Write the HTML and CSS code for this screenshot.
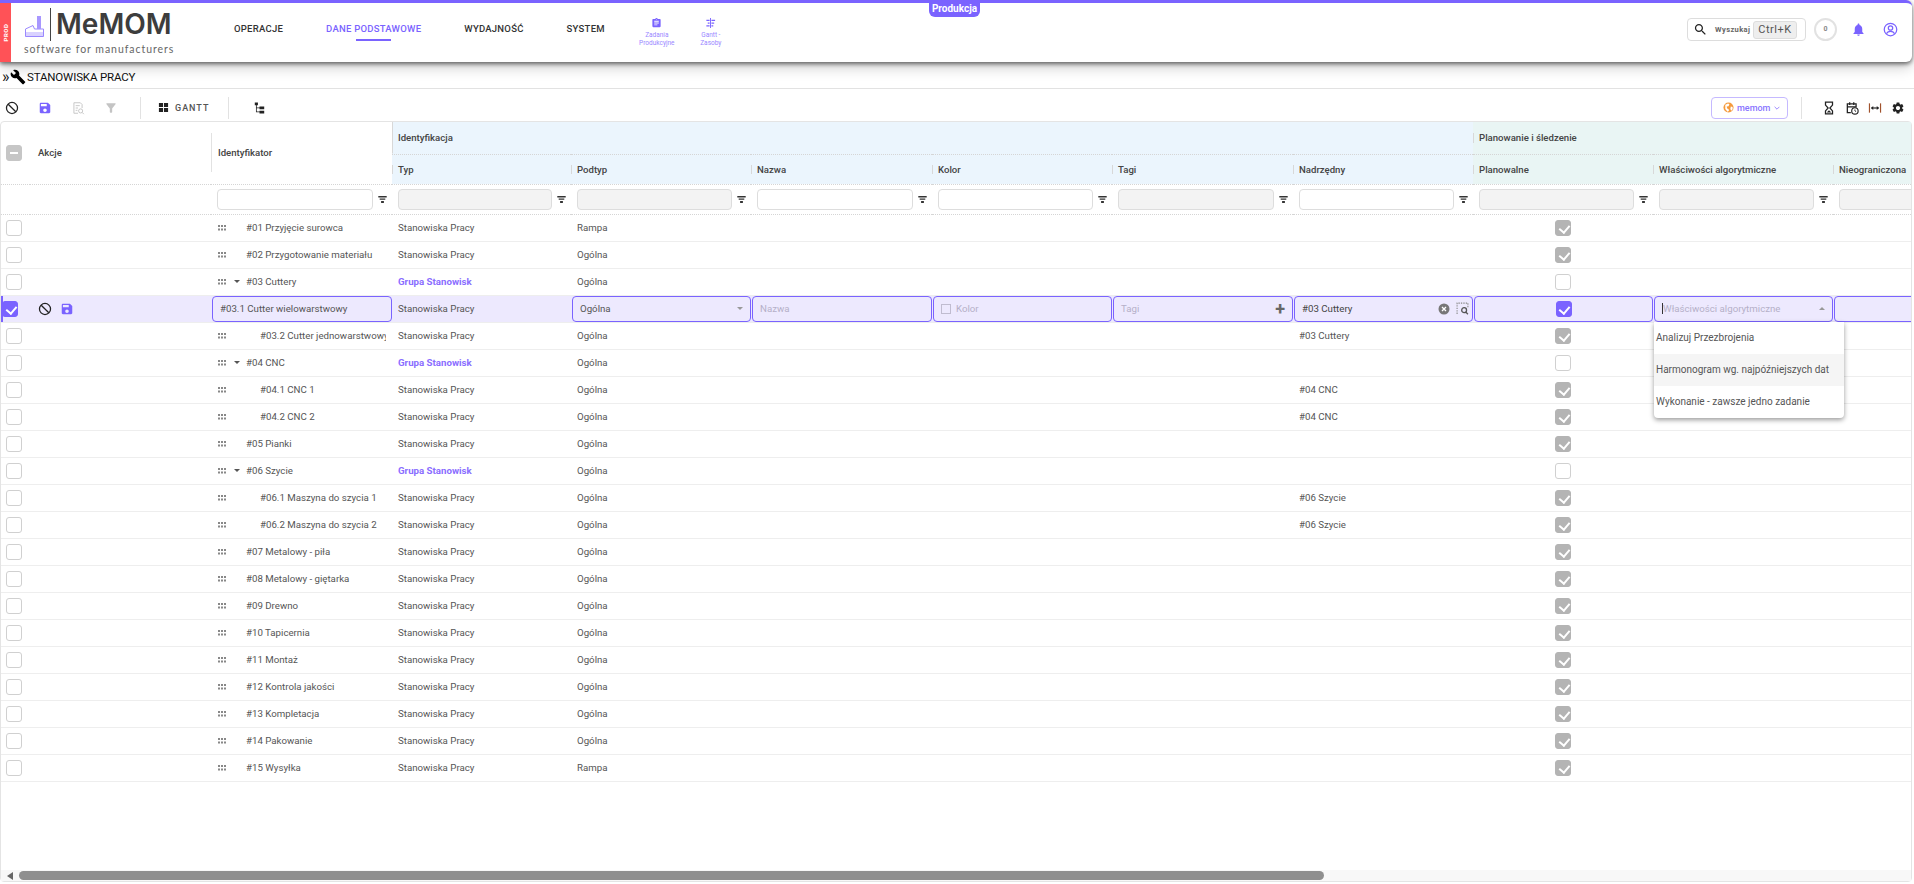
FILE: index.html
```html
<!DOCTYPE html>
<html lang="pl">
<head>
    <meta charset="utf-8"/>
    <meta name="viewport" content="width=device-width, initial-scale=1"/>
    <title>MeMOM - Stanowiska pracy</title>
    <link rel="stylesheet" href="styles.css">
</head>
<body>

    <svg class="sprites" width="0" height="0">
        <symbol id="i-filter" viewBox="0 0 12 10"><path d="M0 0h12v2H0zM2 3.500h8v2H2zM4 7h4v3H4z"/></symbol>
        <symbol id="i-drag" viewBox="0 0 8 6"><path d="M0 0h2v2H0zM3 0h2v2H3zM6 0h2v2H6zM0 3.500h2v2H0zM3 3.500h2v2H3zM6 3.500h2v2H6z"/></symbol>
        <symbol id="i-ban" viewBox="0 0 24 24"><circle cx="12" cy="12" r="9.500" fill="none" stroke="currentColor" stroke-width="2.200"/><path d="M5.500 5.500l13 13" stroke="currentColor" stroke-width="2.200"/></symbol>
        <symbol id="i-save" viewBox="0 0 24 24"><path d="M17 3H5c-1.110 0-2 .9-2 2v14c0 1.100.89 2 2 2h14c1.100 0 2-.9 2-2V7l-4-4zm-5 16c-1.660 0-3-1.340-3-3s1.340-3 3-3 3 1.340 3 3-1.340 3-3 3zm3-10H5V5h10v4z"/></symbol>
    </svg>

    <header class="topbar">
        <div class="env-strip"><span>PROD</span></div>
        <div class="logo">
            <div class="logo-top">
                <svg class="logo-icon" viewBox="0 0 21 22"><path d="M1.500 17h18v4.500h-18z" fill="#d9d2ff"/><path d="M1.500 21.500V14L9 10.500l1.500 3.500h9v7.500z" fill="none" stroke="#9a88ff" stroke-width="1"/><path d="M13 1h4v13h-4z" fill="#a897ff"/></svg>
                <span class="logo-name">MeMOM</span>
            </div>
            <div class="logo-sub">software for manufacturers</div>
        </div>
        <nav class="main-nav">
            <a class="nav-link">OPERACJE</a>
            <a class="nav-link active">DANE PODSTAWOWE</a>
            <a class="nav-link">WYDAJNOŚĆ</a>
            <a class="nav-link">SYSTEM</a>
        </nav>
        <div class="quick-links">
            <a class="quick-link">
                <svg viewBox="0 0 24 24"><path d="M19 3h-4.180C14.400 1.840 13.300 1 12 1c-1.300 0-2.400.84-2.820 2H5c-1.100 0-2 .9-2 2v14c0 1.100.9 2 2 2h14c1.100 0 2-.9 2-2V5c0-1.100-.9-2-2-2zm-7 0c.55 0 1 .45 1 1s-.45 1-1 1-1-.45-1-1 .45-1 1-1zm2 14H7v-2h7v2zm3-4H7v-2h10v2zm0-4H7V7h10v2z"/></svg>
                <span>Zadania<br>Produkcyjne</span>
            </a>
            <a class="quick-link">
                <svg viewBox="0 0 24 24"><path d="M11 1h2v22h-2zM3 5h7v2.500H3zM14 5h8v2.500h-8zM6 11h4v2.500H6zM14 11h6v2.500h-6zM3 17h7v2.500H3zM14 17h4v2.500h-4z"/></svg>
                <span>Gantt -<br>Zasoby</span>
            </a>
        </div>
        <div class="top-right">
            <div class="search-box">
                <svg viewBox="0 0 24 24"><path d="M15.500 14h-.79l-.28-.27C15.410 12.590 16 11.110 16 9.500 16 5.910 13.090 3 9.500 3S3 5.910 3 9.500 5.910 16 9.500 16c1.610 0 3.090-.59 4.230-1.570l.27.28v.79l5 4.990L20.490 19l-4.990-5zm-6 0C7.010 14 5 11.990 5 9.500S7.010 5 9.500 5 14 7.010 14 9.500 11.990 14 9.500 14z"/></svg>
                <span class="search-label">Wyszukaj</span>
                <kbd>Ctrl+K</kbd>
            </div>
            <div class="counter">0</div>
            <svg class="top-icon bell" viewBox="0 0 24 24"><path d="M12 22c1.100 0 2-.9 2-2h-4c0 1.100.89 2 2 2zm6-6v-5c0-3.070-1.640-5.640-4.500-6.320V4c0-.83-.67-1.500-1.500-1.500s-1.500.67-1.500 1.500v.68C7.630 5.360 6 7.920 6 11v5l-2 2v1h16v-1l-2-2z"/></svg>
            <svg class="top-icon user" viewBox="0 0 24 24"><circle cx="12" cy="12" r="10" fill="none" stroke="currentColor" stroke-width="2"/><circle cx="12" cy="9.500" r="3.500" fill="none" stroke="currentColor" stroke-width="2"/><path d="M5.500 18.500c1.500-2.500 3.800-3.500 6.500-3.500s5 1 6.500 3.500" fill="none" stroke="currentColor" stroke-width="2"/></svg>
        </div>
        <div class="module-tab">Produkcja</div>
    </header>

    <div class="page-title">
        <span class="crumb">»</span>
        <svg viewBox="0 0 24 24"><path d="M22.700 19l-9.100-9.100c.9-2.300.4-5-1.500-6.900-2-2-5-2.400-7.400-1.300L9 6 6 9 1.600 4.700C.4 7.100.9 10.100 2.900 12.100c1.900 1.900 4.600 2.400 6.900 1.500l9.100 9.100c.4.400 1 .4 1.400 0l2.300-2.300c.5-.4.5-1.100.1-1.400z"/></svg>
        <span>STANOWISKA PRACY</span>
    </div>

    <div class="toolbar">
        <div class="tool-group">
            <svg class="tool dark"><use href="#i-ban"/></svg>
            <svg class="tool accent"><use href="#i-save"/></svg>
            <svg class="tool muted" viewBox="0 0 24 24"><path d="M5 3h11l3 3v6M5 3v18h7M8 8h7M8 12h4M8 16h3" fill="none" stroke="currentColor" stroke-width="1.600"/><circle cx="16.500" cy="17" r="3.500" fill="none" stroke="currentColor" stroke-width="1.600"/><path d="M19 19.500l3 3" stroke="currentColor" stroke-width="1.600"/></svg>
            <svg class="tool muted" viewBox="0 0 24 24"><path d="M4.250 5.610C6.270 8.200 10 13 10 13v6c0 .55.45 1 1 1h2c.55 0 1-.45 1-1v-6s3.720-4.800 5.740-7.390c.51-.66.04-1.610-.79-1.610H5.040c-.83 0-1.300.95-.79 1.610z"/></svg>
        </div>
        <div class="tool-sep"></div>
        <div class="gantt-btn">
            <svg viewBox="0 0 12 12"><path d="M1 1h4.500v4.500H1zM6.500 1H11v4.500H6.500zM1 6.500h4.500V11H1zM6.500 6.500H11V11H6.500z"/></svg>
            <span>GANTT</span>
        </div>
        <div class="tool-sep"></div>
        <svg class="tree-btn" viewBox="0 0 14 14"><path d="M1 0h4v3.500H1zM7 5h6v3.500H7zM7 10.500h6V14H7z M2.500 3.500h1v8H7v1H2.500zM3.500 6.300H7v1H3.500z"/></svg>
        <div class="toolbar-right">
            <button type="button" class="tenant-btn">
                <svg viewBox="0 0 24 24"><circle cx="12" cy="12" r="11" fill="#f59a3c"/><path d="M5 6l6-3 3 2-2 4-4 1 1 4 3 1 1 4-3 2-5-6zM17 10l4 1v5l-3 3-2-4z" fill="#fff"/></svg>
                <span>memom</span>
                <svg class="chev" viewBox="0 0 10 6"><path d="M1 1l4 4 4-4" fill="none" stroke="currentColor" stroke-width="1.400"/></svg>
            </button>
            <div class="tool-sep"></div>
            <div class="tool-icons">
                <svg viewBox="0 0 24 24"><path d="M6 2h12v5l-4.500 5 4.500 5v5H6v-5l4.500-5L6 7z" fill="none" stroke="#222" stroke-width="2.200"/><path d="M8 19.500l4-3.500 4 3.500z" fill="#222"/></svg>
                <svg viewBox="0 0 24 24"><path d="M10 20H4V5h15v6M4 10h15M8 2v5M15 2v5" fill="none" stroke="#222" stroke-width="2.200"/><circle cx="17" cy="17" r="5.500" fill="none" stroke="#222" stroke-width="2"/><path d="M17 14.500V17l2 1.200" fill="none" stroke="#222" stroke-width="1.500"/></svg>
                <svg viewBox="0 0 24 24"><path d="M2.500 4v16" stroke="#a0522d" stroke-width="2"/><path d="M21.500 4v16" stroke="#a0522d" stroke-width="2"/><path d="M6 12h12" stroke="#222" stroke-width="2"/><path d="M5 12l4-3.500v7zM19 12l-4-3.500v7z" fill="#222"/></svg>
                <svg viewBox="0 0 24 24"><path fill="#222" d="M19.140 12.940c.04-.3.06-.61.06-.94 0-.32-.02-.64-.07-.94l2.030-1.580c.18-.14.23-.41.12-.61l-1.920-3.320c-.12-.22-.37-.29-.59-.22l-2.390.96c-.5-.38-1.030-.7-1.620-.94l-.36-2.540c-.04-.24-.24-.41-.48-.41h-3.840c-.24 0-.43.17-.47.41l-.36 2.540c-.59.24-1.130.57-1.620.94l-2.390-.96c-.22-.08-.47 0-.59.22L2.740 8.870c-.12.21-.08.47.12.61l2.030 1.580c-.05.3-.09.63-.09.94s.02.64.07.94l-2.030 1.580c-.18.14-.23.41-.12.61l1.920 3.320c.12.22.37.29.59.22l2.390-.96c.5.38 1.030.7 1.620.94l.36 2.540c.05.24.24.41.48.41h3.840c.24 0 .44-.17.47-.41l.36-2.540c.59-.24 1.130-.56 1.620-.94l2.390.96c.22.08.47 0 .59-.22l1.920-3.320c.12-.22.07-.47-.12-.61l-2.010-1.580zM12 15.600c-1.980 0-3.600-1.620-3.600-3.600s1.620-3.600 3.600-3.600 3.600 1.620 3.600 3.600-1.620 3.600-3.600 3.600z"/></svg>
            </div>
        </div>
    </div>

    <main class="grid-card">
        <div class="grid-scroll">
            <table class="grid">
                <colgroup>
                    <col class="c-check"><col class="c-actions"><col class="c-id"><col class="c-typ"><col class="c-std"><col class="c-wide"><col class="c-std"><col class="c-wide"><col class="c-std"><col class="c-std"><col class="c-std"><col class="c-std">
                </colgroup>
                <thead>
                    <tr class="head-group">
                        <th rowspan="2" class="head-check"><span class="box head-minus"></span></th>
                        <th rowspan="2" class="head-plain">Akcje</th>
                        <th rowspan="2" class="head-plain head-tall">Identyfikator</th>
                        <th colspan="6" class="blue head-tall-sep">Identyfikacja</th>
                        <th colspan="3" class="green head-sep-group">Planowanie i śledzenie</th>
                    </tr>
                    <tr class="head-cols">
                        <th class="blue"><span class="sep">Typ</span></th>
                        <th class="blue"><span class="sep">Podtyp</span></th>
                        <th class="blue"><span class="sep">Nazwa</span></th>
                        <th class="blue"><span class="sep">Kolor</span></th>
                        <th class="blue"><span class="sep">Tagi</span></th>
                        <th class="blue"><span class="sep">Nadrzędny</span></th>
                        <th class="green"><span class="sep">Planowalne</span></th>
                        <th class="green"><span class="sep">Właściwości algorytmiczne</span></th>
                        <th class="green"><span class="sep">Nieograniczona</span></th>
                    </tr>
                    <tr class="head-filter">
                        <td></td><td></td>
                        <td><div class="flt"><span class="flt-in"></span><svg><use href="#i-filter"/></svg></div></td>
                        <td><div class="flt"><span class="flt-in off"></span><svg><use href="#i-filter"/></svg></div></td>
                        <td><div class="flt"><span class="flt-in off"></span><svg><use href="#i-filter"/></svg></div></td>
                        <td><div class="flt"><span class="flt-in"></span><svg><use href="#i-filter"/></svg></div></td>
                        <td><div class="flt"><span class="flt-in"></span><svg><use href="#i-filter"/></svg></div></td>
                        <td><div class="flt"><span class="flt-in off"></span><svg><use href="#i-filter"/></svg></div></td>
                        <td><div class="flt"><span class="flt-in"></span><svg><use href="#i-filter"/></svg></div></td>
                        <td><div class="flt"><span class="flt-in off"></span><svg><use href="#i-filter"/></svg></div></td>
                        <td><div class="flt"><span class="flt-in off"></span><svg><use href="#i-filter"/></svg></div></td>
                        <td><div class="flt"><span class="flt-in off"></span><svg><use href="#i-filter"/></svg></div></td>
                    </tr>
                </thead>
                <tbody>
                    <tr><td><span class="box"></span></td><td></td><td><div class="name"><svg><use href="#i-drag"/></svg><i class="caret none"></i><span>#01 Przyjęcie surowca</span></div></td><td>Stanowiska Pracy</td><td>Rampa</td><td></td><td></td><td></td><td></td><td class="mid"><span class="box done"></span></td><td></td><td></td></tr>
                    <tr><td><span class="box"></span></td><td></td><td><div class="name"><svg><use href="#i-drag"/></svg><i class="caret none"></i><span>#02 Przygotowanie materiału</span></div></td><td>Stanowiska Pracy</td><td>Ogólna</td><td></td><td></td><td></td><td></td><td class="mid"><span class="box done"></span></td><td></td><td></td></tr>
                    <tr><td><span class="box"></span></td><td></td><td><div class="name"><svg><use href="#i-drag"/></svg><i class="caret"></i><span>#03 Cuttery</span></div></td><td class="group">Grupa Stanowisk</td><td>Ogólna</td><td></td><td></td><td></td><td></td><td class="mid"><span class="box"></span></td><td></td><td></td></tr>
                    <tr class="editing">
                        <td><span class="box on"></span></td>
                        <td><div class="row-actions"><svg class="dark"><use href="#i-ban"/></svg><svg class="accent"><use href="#i-save"/></svg></div></td>
                        <td><div class="edit"><span class="val">#03.1 Cutter wielowarstwowy</span></div></td>
                        <td>Stanowiska Pracy</td>
                        <td><div class="edit"><span class="val">Ogólna</span><i class="caret sel"></i></div></td>
                        <td><div class="edit"><span class="ph">Nazwa</span></div></td>
                        <td><div class="edit"><span class="swatch"></span><span class="ph">Kolor</span></div></td>
                        <td><div class="edit"><span class="ph">Tagi</span><b class="plus">+</b></div></td>
                        <td><div class="edit"><span class="val strong">#03 Cuttery</span>
                            <svg class="clear" viewBox="0 0 24 24"><circle cx="12" cy="12" r="11" fill="#777"/><path d="M8 8l8 8M16 8l-8 8" stroke="#fff" stroke-width="2.600"/></svg>
                            <svg class="pick" viewBox="0 0 24 24"><path d="M2 22V2h20v8" fill="none" stroke="#888" stroke-width="2" stroke-dasharray="2.500 2"/><circle cx="15" cy="15" r="4.500" fill="none" stroke="#555" stroke-width="2.400"/><path d="M18 18.500l4 4" stroke="#555" stroke-width="2.400"/></svg>
                        </div></td>
                        <td><div class="edit center"><span class="box on"></span></div></td>
                        <td class="has-menu"><div class="edit"><span class="ph cursor">Właściwości algorytmiczne</span><i class="caret sel up"></i></div>
                            <ul class="menu">
                                <li>Analizuj Przezbrojenia</li>
                                <li class="hover">Harmonogram wg. najpóźniejszych dat</li>
                                <li>Wykonanie - zawsze jedno zadanie</li>
                            </ul>
                        </td>
                        <td><div class="edit"></div></td>
                    </tr>
                    <tr><td><span class="box"></span></td><td></td><td><div class="name deep"><svg><use href="#i-drag"/></svg><span>#03.2 Cutter jednowarstwowy</span></div></td><td>Stanowiska Pracy</td><td>Ogólna</td><td></td><td></td><td></td><td>#03 Cuttery</td><td class="mid"><span class="box done"></span></td><td></td><td></td></tr>
                    <tr><td><span class="box"></span></td><td></td><td><div class="name"><svg><use href="#i-drag"/></svg><i class="caret"></i><span>#04 CNC</span></div></td><td class="group">Grupa Stanowisk</td><td>Ogólna</td><td></td><td></td><td></td><td></td><td class="mid"><span class="box"></span></td><td></td><td></td></tr>
                    <tr><td><span class="box"></span></td><td></td><td><div class="name deep"><svg><use href="#i-drag"/></svg><span>#04.1 CNC 1</span></div></td><td>Stanowiska Pracy</td><td>Ogólna</td><td></td><td></td><td></td><td>#04 CNC</td><td class="mid"><span class="box done"></span></td><td></td><td></td></tr>
                    <tr><td><span class="box"></span></td><td></td><td><div class="name deep"><svg><use href="#i-drag"/></svg><span>#04.2 CNC 2</span></div></td><td>Stanowiska Pracy</td><td>Ogólna</td><td></td><td></td><td></td><td>#04 CNC</td><td class="mid"><span class="box done"></span></td><td></td><td></td></tr>
                    <tr><td><span class="box"></span></td><td></td><td><div class="name"><svg><use href="#i-drag"/></svg><i class="caret none"></i><span>#05 Pianki</span></div></td><td>Stanowiska Pracy</td><td>Ogólna</td><td></td><td></td><td></td><td></td><td class="mid"><span class="box done"></span></td><td></td><td></td></tr>
                    <tr><td><span class="box"></span></td><td></td><td><div class="name"><svg><use href="#i-drag"/></svg><i class="caret"></i><span>#06 Szycie</span></div></td><td class="group">Grupa Stanowisk</td><td>Ogólna</td><td></td><td></td><td></td><td></td><td class="mid"><span class="box"></span></td><td></td><td></td></tr>
                    <tr><td><span class="box"></span></td><td></td><td><div class="name deep"><svg><use href="#i-drag"/></svg><span>#06.1 Maszyna do szycia 1</span></div></td><td>Stanowiska Pracy</td><td>Ogólna</td><td></td><td></td><td></td><td>#06 Szycie</td><td class="mid"><span class="box done"></span></td><td></td><td></td></tr>
                    <tr><td><span class="box"></span></td><td></td><td><div class="name deep"><svg><use href="#i-drag"/></svg><span>#06.2 Maszyna do szycia 2</span></div></td><td>Stanowiska Pracy</td><td>Ogólna</td><td></td><td></td><td></td><td>#06 Szycie</td><td class="mid"><span class="box done"></span></td><td></td><td></td></tr>
                    <tr><td><span class="box"></span></td><td></td><td><div class="name"><svg><use href="#i-drag"/></svg><i class="caret none"></i><span>#07 Metalowy - piła</span></div></td><td>Stanowiska Pracy</td><td>Ogólna</td><td></td><td></td><td></td><td></td><td class="mid"><span class="box done"></span></td><td></td><td></td></tr>
                    <tr><td><span class="box"></span></td><td></td><td><div class="name"><svg><use href="#i-drag"/></svg><i class="caret none"></i><span>#08 Metalowy - giętarka</span></div></td><td>Stanowiska Pracy</td><td>Ogólna</td><td></td><td></td><td></td><td></td><td class="mid"><span class="box done"></span></td><td></td><td></td></tr>
                    <tr><td><span class="box"></span></td><td></td><td><div class="name"><svg><use href="#i-drag"/></svg><i class="caret none"></i><span>#09 Drewno</span></div></td><td>Stanowiska Pracy</td><td>Ogólna</td><td></td><td></td><td></td><td></td><td class="mid"><span class="box done"></span></td><td></td><td></td></tr>
                    <tr><td><span class="box"></span></td><td></td><td><div class="name"><svg><use href="#i-drag"/></svg><i class="caret none"></i><span>#10 Tapicernia</span></div></td><td>Stanowiska Pracy</td><td>Ogólna</td><td></td><td></td><td></td><td></td><td class="mid"><span class="box done"></span></td><td></td><td></td></tr>
                    <tr><td><span class="box"></span></td><td></td><td><div class="name"><svg><use href="#i-drag"/></svg><i class="caret none"></i><span>#11 Montaż</span></div></td><td>Stanowiska Pracy</td><td>Ogólna</td><td></td><td></td><td></td><td></td><td class="mid"><span class="box done"></span></td><td></td><td></td></tr>
                    <tr><td><span class="box"></span></td><td></td><td><div class="name"><svg><use href="#i-drag"/></svg><i class="caret none"></i><span>#12 Kontrola jakości</span></div></td><td>Stanowiska Pracy</td><td>Ogólna</td><td></td><td></td><td></td><td></td><td class="mid"><span class="box done"></span></td><td></td><td></td></tr>
                    <tr><td><span class="box"></span></td><td></td><td><div class="name"><svg><use href="#i-drag"/></svg><i class="caret none"></i><span>#13 Kompletacja</span></div></td><td>Stanowiska Pracy</td><td>Ogólna</td><td></td><td></td><td></td><td></td><td class="mid"><span class="box done"></span></td><td></td><td></td></tr>
                    <tr><td><span class="box"></span></td><td></td><td><div class="name"><svg><use href="#i-drag"/></svg><i class="caret none"></i><span>#14 Pakowanie</span></div></td><td>Stanowiska Pracy</td><td>Ogólna</td><td></td><td></td><td></td><td></td><td class="mid"><span class="box done"></span></td><td></td><td></td></tr>
                    <tr><td><span class="box"></span></td><td></td><td><div class="name"><svg><use href="#i-drag"/></svg><i class="caret none"></i><span>#15 Wysyłka</span></div></td><td>Stanowiska Pracy</td><td>Rampa</td><td></td><td></td><td></td><td></td><td class="mid"><span class="box done"></span></td><td></td><td></td></tr>
                </tbody>
            </table>
        </div>
        <div class="hscroll">
            <i class="hscroll-arrow"></i>
            <div class="hscroll-thumb"></div>
        </div>
    </main>

</body>
</html>
```

FILE: styles.css
```css
/* kolory wspolne */
:root {
    --accent: #7a63ff;
    --text: #555;
    --line: #eee;
    --dots: #d5d5d5;
}

* {
    box-sizing: border-box;
}

html, body {
    height: 100%;
}

body {
    margin: 0;
    display: flex;
    flex-direction: column;
    overflow: hidden;
    background: #fff;
    color: var(--text);
    font-family: Roboto, "Liberation Sans", sans-serif;
    font-size: 9.700px;
}

.sprites {
    position: absolute;
}

/* gorny pasek */
.topbar {
    position: relative;
    z-index: 2;
    flex: none;
    display: flex;
    align-items: stretch;
    height: 62px;
    margin-right: 2px;
    background: #fff;
    border-top: 3px solid var(--accent);
    border-radius: 0 6px 6px 0;
    box-shadow: 0 2px 4px rgba(0, 0, 0, .55), 0 6px 14px rgba(0, 0, 0, .18);
}

.env-strip {
    flex: none;
    width: 11px;
    display: flex;
    align-items: center;
    justify-content: center;
    background: #ff5257;
}

.env-strip span {
    transform: rotate(-90deg);
    color: #fff;
    font-size: 6px;
    font-weight: 700;
    letter-spacing: .5px;
}

.logo {
    flex: none;
    width: 223px;
    padding: 5px 0 0 13px;
}

.logo-top {
    display: flex;
    align-items: center;
    height: 33px;
}

.logo-icon {
    width: 21px;
    height: 22px;
    margin-top: 2px;
}

.logo-name {
    margin-left: 5px;
    padding-left: 5px;
    border-left: 1px solid #444;
    color: #3d3d3d;
    font-family: Inter, sans-serif;
    font-size: 28px;
    font-weight: 600;
    line-height: 33px;
}

.logo-sub {
    margin-top: 2px;
    color: #666;
    font-family: Lato, sans-serif;
    font-size: 10.500px;
    letter-spacing: .96px;
    white-space: nowrap;
}

.main-nav {
    flex: none;
    display: flex;
    align-items: center;
    gap: 43px;
    padding-bottom: 8px;
}

.nav-link {
    position: relative;
    color: #333;
    font-size: 9.500px;
    font-weight: 500;
    letter-spacing: .25px;
}

.nav-link.active {
    color: var(--accent);
}

.nav-link.active::after {
    content: "";
    position: absolute;
    left: 30px;
    right: 30px;
    bottom: -7px;
    height: 2px;
    background: var(--accent);
}

.quick-links {
    display: flex;
    margin-left: 25px;
}

.quick-link {
    width: 54px;
    padding-top: 14px;
    text-align: center;
    color: #9a88ff;
    font-size: 6.500px;
    line-height: 7.500px;
}

.quick-link svg {
    display: block;
    width: 11px;
    height: 12px;
    margin: 0 auto 3px;
    fill: var(--accent);
}

.top-right {
    margin-left: auto;
    display: flex;
    align-items: center;
    gap: 8px;
    padding: 0 10px 6px 0;
}

.search-box {
    display: flex;
    align-items: center;
    width: 119px;
    height: 23px;
    padding: 0 8px 0 5px;
    border: 1px solid #ddd;
    border-radius: 4px;
}

.search-box svg {
    width: 15px;
    height: 15px;
    fill: #222;
}

.search-label {
    margin-left: 7px;
    color: #666;
    font-size: 7.500px;
    font-weight: 700;
    letter-spacing: .4px;
}

kbd {
    margin-left: auto;
    width: 44px;
    height: 18px;
    background: #eee;
    border: 1px solid #ddd;
    border-radius: 3px;
    text-align: center;
    color: #555;
    font-family: Roboto, sans-serif;
    font-size: 11px;
    letter-spacing: .5px;
    line-height: 16px;
}

.counter {
    width: 23px;
    height: 23px;
    border: 2px solid #e2e2e2;
    border-radius: 50%;
    text-align: center;
    color: #888;
    font-size: 7px;
    font-weight: 700;
    line-height: 19px;
}

.top-icon {
    width: 15px;
    height: 15px;
    color: var(--accent);
    fill: var(--accent);
}

.top-icon.bell {
    margin: 0 4px 0 6px;
}

.top-icon.user {
    margin: 0 4px 0 5px;
    fill: none;
}

.module-tab {
    position: absolute;
    top: 0;
    left: 929px;
    width: 51px;
    height: 14px;
    background: var(--accent);
    border-radius: 0 0 6px 6px;
    text-align: center;
    color: #fff;
    font-size: 10px;
    font-weight: 700;
    line-height: 12px;
}

/* tytul strony */
.page-title {
    flex: none;
    display: flex;
    align-items: center;
    height: 27px;
    padding: 4px 0 0 2px;
    border-bottom: 1px solid #e2e2e2;
    color: #111;
    font-size: 11.500px;
    letter-spacing: -.15px;
}

.crumb {
    width: 8px;
    font-size: 16px;
    line-height: 16px;
}

.page-title svg {
    width: 16px;
    height: 16px;
    margin-right: 1px;
}

/* pasek narzedzi */
.toolbar {
    flex: none;
    display: flex;
    align-items: center;
    height: 32px;
    padding: 5px 0 0 5px;
}

.tool-group {
    display: flex;
    align-items: center;
    gap: 19px;
    width: 135px;
}

.tool {
    width: 14px;
    height: 14px;
}

.dark {
    color: #222;
}

.accent {
    color: var(--accent);
    fill: var(--accent);
}

.muted {
    color: #c4c4c4;
    fill: #c4c4c4;
}

.tool-sep {
    flex: none;
    width: 1px;
    height: 22px;
    background: #e2e2e2;
}

.gantt-btn {
    display: flex;
    align-items: center;
    width: 87px;
    padding-left: 17px;
    color: #555;
    font-size: 9px;
    font-weight: 500;
    letter-spacing: 1px;
}

.gantt-btn svg {
    width: 11px;
    height: 11px;
    margin-right: 6px;
    fill: #222;
}

.tree-btn {
    width: 11px;
    height: 12px;
    margin-left: 25px;
    fill: #222;
}

.toolbar-right {
    margin-left: auto;
    display: flex;
    align-items: center;
    padding-right: 9px;
}

.tenant-btn {
    display: flex;
    align-items: center;
    width: 77px;
    height: 22px;
    margin-right: 13px;
    padding: 0 7px 0 11px;
    background: #fff;
    border: 1px solid #c5b9ff;
    border-radius: 4px;
    color: #8a75ff;
    font-family: Roboto, sans-serif;
    font-size: 9px;
    font-weight: 500;
}

.tenant-btn svg:first-child {
    width: 11px;
    height: 11px;
    margin-right: 3px;
}

.tenant-btn .chev {
    width: 6px;
    height: 4px;
    margin-left: auto;
}

.tool-icons {
    display: flex;
    gap: 9px;
    margin-left: 20px;
}

.tool-icons svg {
    width: 14px;
    height: 14px;
}

/* tabela */
.grid-card {
    flex: 1;
    min-height: 0;
    display: flex;
    flex-direction: column;
    margin: 0 2px 2px 0;
    border: 1px solid #e4e4e4;
    border-radius: 4px;
}

.grid-scroll {
    flex: 1;
    min-height: 0;
    overflow: hidden;
}

.grid {
    table-layout: fixed;
    width: 2012px;
    border-collapse: collapse;
}

.c-check { width: 29px; }
.c-actions { width: 181px; }
.c-id { width: 181px; }
.c-typ { width: 179px; }
.c-std { width: 180px; }
.c-wide { width: 181px; }

.grid th {
    padding: 0 6px;
    text-align: left;
    color: #444;
    font-size: 9.600px;
    font-weight: 500;
    white-space: nowrap;
}

.head-group th {
    height: 32px;
}

.head-cols th {
    height: 30px;
    border-top: 1px dotted var(--dots);
    border-bottom: 1px dotted var(--dots);
}

.blue {
    background: #ebf5fd;
}

.green {
    background: #e9f5f4;
}

.head-check {
    padding: 0 0 0 5px !important;
    border-bottom: 1px dotted var(--dots);
}

.head-plain {
    border-bottom: 1px dotted var(--dots);
}

.head-plain + .head-plain {
    padding-left: 7px !important;
    background: linear-gradient(#e2e2e2, #e2e2e2) left center / 1px 39px no-repeat;
}

.head-check + .head-plain {
    padding-left: 8px !important;
}

.head-tall-sep {
    background: linear-gradient(#d8d8d8, #d8d8d8) left bottom / 1px 100% no-repeat, #ebf5fd;
}

.head-sep-group {
    background: linear-gradient(#d8d8d8, #d8d8d8) left center / 1px 10px no-repeat, #e9f5f4;
}

.sep {
    position: relative;
    display: block;
}

.sep::before {
    content: "";
    position: absolute;
    left: -6px;
    top: 1px;
    bottom: 1px;
    width: 1px;
    background: #d8d8d8;
}

.head-filter td {
    height: 30px;
    padding: 0 6px;
    border-bottom: 1px dotted var(--dots);
}

.flt {
    display: flex;
    align-items: center;
}

.flt-in {
    flex: 1;
    height: 21px;
    background: #fff;
    border: 1px solid #ddd;
    border-radius: 4px;
}

.flt-in.off {
    background: #f3f3f3;
}

.flt svg {
    flex: none;
    width: 9px;
    height: 7px;
    margin: 0 -1px 0 5px;
    fill: #333;
}

.grid tbody td {
    height: 27px;
    padding: 0 6px;
    border-bottom: 1px solid var(--line);
    white-space: nowrap;
    overflow: hidden;
}

.grid tbody td:first-child,
.head-filter td:first-child {
    padding: 0 0 0 5px;
}

.group {
    color: #8a6dff;
    font-weight: 700;
}

.mid {
    text-align: center;
}

.box {
    position: relative;
    display: inline-block;
    width: 16px;
    height: 16px;
    vertical-align: middle;
    background: #fff;
    border: 1px solid #d0d0d0;
    border-radius: 3px;
}

.box.done {
    background: #b4b4b4;
    border-color: #b4b4b4;
}

.box.on {
    background: var(--accent);
    border-color: var(--accent);
}

.box.done::after,
.box.on::after {
    content: "";
    position: absolute;
    left: 4.500px;
    top: 2px;
    width: 5px;
    height: 8px;
    border: solid #fff;
    border-width: 0 2px 2px 0;
    transform: rotate(40deg);
}

.head-minus {
    background: #c6c6c6;
    border-color: #c6c6c6;
}

.head-minus::after {
    content: "";
    position: absolute;
    left: 3px;
    right: 3px;
    top: 6px;
    height: 2px;
    background: #fff;
}

.name {
    display: flex;
    align-items: center;
    padding-left: 1px;
    overflow: hidden;
}

.name svg {
    flex: none;
    width: 8px;
    height: 6px;
    margin-right: 8px;
    fill: #888;
}

.name.deep svg {
    margin-right: 34px;
}

.caret {
    flex: none;
    width: 0;
    height: 0;
    margin-right: 6px;
    border: 3px solid transparent;
    border-top: 3.500px solid #555;
    border-bottom: 0;
}

.caret.none {
    visibility: hidden;
}

.caret.sel {
    margin: 0 0 0 auto;
    border-top-color: #999;
}

.caret.sel.up {
    border-top: 0;
    border-bottom: 3.500px solid #999;
}

/* wiersz w edycji */
.editing td {
    background: #ede9fe;
    overflow: visible !important;
}

.grid tbody .editing td {
    padding: 0 0 0 1px;
}

.editing td:first-child {
    box-shadow: inset 2px 0 0 var(--accent);
}

.grid tbody .editing td:nth-child(4) {
    padding-left: 6px;
}

.row-actions {
    display: flex;
    gap: 8px;
    padding-left: 7px;
}

.row-actions svg {
    width: 14px;
    height: 14px;
}

.edit {
    display: flex;
    align-items: center;
    height: 26px;
    padding: 0 7px;
    border: 1px solid var(--accent);
    border-radius: 4px;
}

.edit.center {
    justify-content: center;
}

.val {
    color: #555;
}

.strong {
    color: #444;
}

.ph {
    color: #b5b0c8;
}

.cursor {
    border-left: 1px solid #333;
}

.swatch {
    width: 10px;
    height: 10px;
    margin-right: 5px;
    border: 1px solid #c0bcd0;
}

.plus {
    margin-left: auto;
    color: #666;
    font-size: 18px;
    font-weight: 700;
    line-height: 18px;
}

.clear {
    width: 12px;
    height: 12px;
    margin-left: auto;
}

.pick {
    width: 13px;
    height: 13px;
    margin: 0 -4px 0 6px;
}

.has-menu {
    position: relative;
}

.menu {
    position: absolute;
    z-index: 3;
    top: 26px;
    left: 1px;
    width: 190px;
    margin: 0;
    padding: 0;
    list-style: none;
    background: #fff;
    border-radius: 0 0 4px 4px;
    box-shadow: 0 2px 5px rgba(0, 0, 0, .4);
}

.menu li {
    height: 32.300px;
    padding: 0 2px;
    color: #555;
    font-size: 10px;
    line-height: 32.300px;
}

.menu .hover {
    background: #f5f5f5;
}

/* pasek przewijania */
.hscroll {
    flex: none;
    position: relative;
    height: 11px;
    background: #f8f8f8;
}

.hscroll-arrow {
    position: absolute;
    left: 6px;
    top: 2px;
    border: 4px solid transparent;
    border-left: 0;
    border-right: 6px solid #666;
}

.hscroll-thumb {
    width: 1305px;
    height: 9px;
    margin: 1px 0 0 18px;
    background: #8f8f8f;
    border-radius: 5px;
}
```
